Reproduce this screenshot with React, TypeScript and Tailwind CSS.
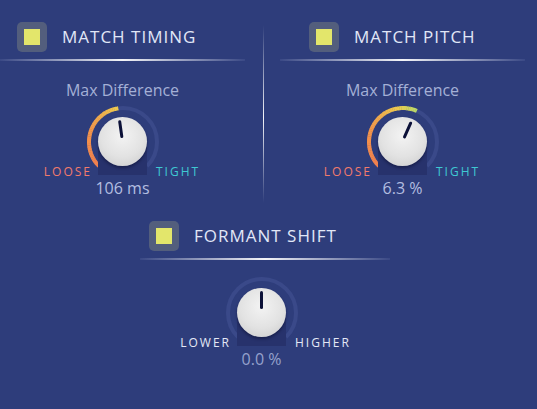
import React from 'react';

type Rgb = [number, number, number];

// colour of the value arc by its angle (deg from top, clockwise)
const stops: [number, Rgb][] = [
  [-135, [242, 128, 78]],
  [-70, [243, 150, 74]],
  [-10, [238, 202, 78]],
  [28, [174, 222, 110]],
];

function arcColor(deg: number) {
  for (let i = 0; i < stops.length - 1; i++) {
    const [a0, c0] = stops[i];
    const [a1, c1] = stops[i + 1];
    if (deg <= a1) {
      const t = Math.max(0, (deg - a0) / (a1 - a0));
      const c = c0.map((v, k) => Math.round(v + (c1[k] - v) * t));
      return `rgb(${c[0]},${c[1]},${c[2]})`;
    }
  }
  const c = stops[stops.length - 1][1];
  return `rgb(${c[0]},${c[1]},${c[2]})`;
}

function polar(cx: number, cy: number, r: number, deg: number) {
  const a = ((deg - 90) * Math.PI) / 180;
  return [cx + r * Math.cos(a), cy + r * Math.sin(a)];
}

function arc(cx: number, cy: number, r: number, a0: number, a1: number) {
  const [x0, y0] = polar(cx, cy, r, a0);
  const [x1, y1] = polar(cx, cy, r, a1);
  const large = a1 - a0 > 180 ? 1 : 0;
  return `M ${x0} ${y0} A ${r} ${r} 0 ${large} 1 ${x1} ${y1}`;
}

interface KnobProps {
  angle: number;
  showArc: boolean;
  left: string;
  right: string;
  leftClass: string;
  rightClass: string;
  value: string;
  valueClass: string;
}

function Knob({ angle, showArc, left, right, leftClass, rightClass, value, valueClass }: KnobProps) {
  const segs: { a0: number; a1: number }[] = [];
  if (showArc) {
    for (let a = -135; a < angle; a += 3) {
      segs.push({ a0: a, a1: Math.min(a + 3.6, angle) });
    }
  }

  return (
    <div>
      <div className="grid grid-cols-[1fr_49px_1fr] gap-x-[8px] items-end">
        <span className={`justify-self-end mb-[-5px] mr-[-2px] text-[12px] leading-[16px] tracking-[2px] ${leftClass}`}>
          {left}
        </span>
        <div className="relative w-[49px] h-[58px]">
          <svg className="absolute left-[-15.5px] top-[-15.5px]" width="80" height="80" viewBox="0 0 80 80">
            <path d={arc(40, 40, 34, -135, 135)} fill="none" stroke="#3a4989" strokeWidth="4" />
            {segs.map((s, i) => (
              <path key={i} d={arc(40, 40, 34, s.a0, s.a1)} fill="none" stroke={arcColor(s.a0)} strokeWidth="4" />
            ))}
          </svg>
          <div className="absolute left-0 right-0 top-[24px] bottom-0 bg-[#27326c]" />
          <div className="absolute left-0 top-0 w-[49px] h-[49px] rounded-full bg-[radial-gradient(circle_at_50%_38%,#f3f3f3_0%,#e2e2e2_55%,#c9c9c9_100%)] shadow-[0_2px_3px_rgba(8,12,40,0.45)]">
            <div className="absolute inset-0" style={{ transform: `rotate(${angle}deg)` }}>
              <div className="absolute left-[23px] top-[3px] w-[3px] h-[18px] rounded-full bg-[#0c1138]" />
            </div>
          </div>
        </div>
        <span className={`justify-self-start mb-[-5px] pl-[1px] text-[12px] leading-[16px] tracking-[2px] ${rightClass}`}>
          {right}
        </span>
      </div>
      <div className={`mt-[2px] text-center text-[16px] leading-[22px] ${valueClass}`}>{value}</div>
    </div>
  );
}

function Header({ title, pad }: { title: string; pad: string }) {
  return (
    <div>
      <div className={`flex items-center h-[30px] ${pad}`}>
        <div className="w-[30px] h-[30px] rounded-[5px] bg-[#535e7d] flex items-center justify-center">
          <div className="w-[16px] h-[16px] bg-[#e3e66b]" />
        </div>
        <span className="ml-[15px] text-[17px] leading-[24px] tracking-[1px] text-[#e1e7f7]">{title}</span>
      </div>
      <div className="mt-[7px] h-[2px] bg-[linear-gradient(90deg,rgba(200,210,255,0.08),rgba(255,255,255,0.95)_50%,rgba(200,210,255,0.08))]" />
    </div>
  );
}

export default function App() {
  return (
    <div className="w-[537px] h-[409px] overflow-hidden bg-[#2e3d7b] font-['Open_Sans',sans-serif]">
      <div className="flex pt-[22px]">
        <div className="w-[245px]">
          <Header title="MATCH TIMING" pad="pl-[17px]" />
          <div className="mt-[18px] text-center text-[16px] leading-[22px] text-[#a4b0d6]">Max Difference</div>
          <div className="mt-[16px]">
            <Knob
              angle={-8}
              showArc
              left="LOOSE"
              right="TIGHT"
              leftClass="text-[#f27b6b]"
              rightClass="text-[#3fc9d2]"
              value="106 ms"
              valueClass="text-[#b3bee0]"
            />
          </div>
        </div>
        <div className="ml-[18px] mt-[3px] w-px h-[178px] bg-[linear-gradient(180deg,rgba(220,228,255,0)_0%,rgba(255,255,255,0.95)_52%,rgba(220,228,255,0)_100%)]" />
        <div className="ml-[16px] w-[245px]">
          <Header title="MATCH PITCH" pad="pl-[29px]" />
          <div className="mt-[18px] text-center text-[16px] leading-[22px] text-[#a4b0d6]">Max Difference</div>
          <div className="mt-[16px]">
            <Knob
              angle={24}
              showArc
              left="LOOSE"
              right="TIGHT"
              leftClass="text-[#f27b6b]"
              rightClass="text-[#3fc9d2]"
              value="6.3 %"
              valueClass="text-[#b3bee0]"
            />
          </div>
        </div>
      </div>
      <div className="ml-[140px] w-[250px] mt-[18px]">
        <Header title="FORMANT SHIFT" pad="pl-[9px]" />
        <div className="mt-[28px] mr-[7px]">
          <Knob
            angle={0}
            showArc={false}
            left="LOWER"
            right="HIGHER"
            leftClass="text-[#e4e9f6]"
            rightClass="text-[#e4e9f6]"
            value="0.0 %"
            valueClass="text-[#95a1cc]"
          />
        </div>
      </div>
    </div>
  );
}
